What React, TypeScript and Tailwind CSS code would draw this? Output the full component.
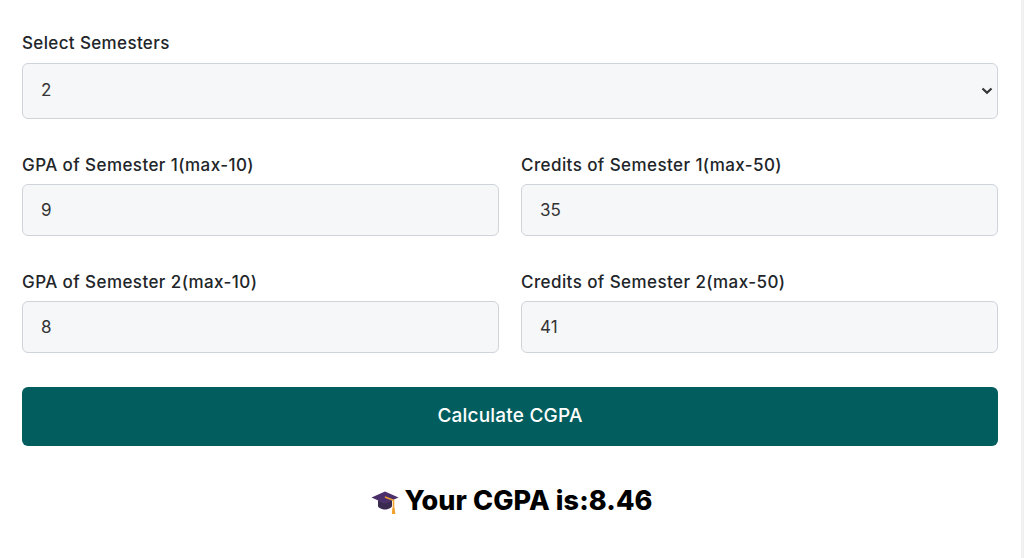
import React from "react";

const input = "block w-full h-[52px] rounded-[6px] border border-[#ced4da] bg-[#f6f7f9] px-[18px] text-[17px] text-[#333333] font-['Inter','Liberation_Sans',sans-serif] outline-none";

function Field({ name, value }: { name: string; value: string }) {
  return (
    <div className="flex-1 min-w-0">
      <label className="block text-[17px] leading-[26px] tracking-[0.42px] font-[450] text-[#212529] font-['Inter','Liberation_Sans',sans-serif]">{name}</label>
      <input className={`${input} mt-[6px]`} value={value} readOnly />
    </div>
  );
}

function Cap() {
  return (
    <svg width="28" height="26" viewBox="0 0 28 26" className="shrink-0">
      <path d="M7 12v6c0 1.5 3.5 3.5 7 3.5s7-2 7-3.5v-6l-7 3z" fill="#3b2a4f" />
      <path d="M0.5 9.5 14 3.5l13.5 6L14 15.5z" fill="#4b2f6b" />
      <path d="M14 9l8.5 3.2V21" fill="none" stroke="#f0a22e" strokeWidth="1.6" />
      <path d="M21.3 20h2.4l.6 6h-3.4z" fill="#f0a22e" />
    </svg>
  );
}

export default function App() {
  return (
    <div className="flex h-[558px] w-[1024px] overflow-hidden bg-white">
      <main className="flex-1 pl-[22px] pr-[23px] pt-[31px]">
        <label className="block text-[17px] leading-[24px] tracking-[0.36px] font-[450] text-[#212529] font-['Inter','Liberation_Sans',sans-serif]">Select Semesters</label>
        <div className="relative mt-[8px]">
          <select
            className="block w-full h-[56px] appearance-none rounded-[6px] border border-[#ced4da] bg-[#f6f7f9] px-[18px] text-[17px] text-[#333333] font-['Inter','Liberation_Sans',sans-serif] outline-none"
            defaultValue="2"
          >
            <option>1</option>
            <option>2</option>
            <option>3</option>
          </select>
          <svg width="12" height="8" viewBox="0 0 12 8" className="absolute right-[5px] top-[24px] pointer-events-none">
            <path d="M1.5 1.5 6 5.8l4.5-4.3" fill="none" stroke="#333333" strokeWidth="2.2" />
          </svg>
        </div>

        <div className="mt-[33px] flex gap-[22px]">
          <Field name="GPA of Semester 1(max-10)" value="9" />
          <Field name="Credits of Semester 1(max-50)" value="35" />
        </div>
        <div className="mt-[33px] flex gap-[22px]">
          <Field name="GPA of Semester 2(max-10)" value="8" />
          <Field name="Credits of Semester 2(max-50)" value="41" />
        </div>

        <button className="mt-[34px] block w-full h-[59px] rounded-[6px] bg-[#025e5e] text-center text-[19px] tracking-[0.2px] font-medium text-white font-['Inter','Liberation_Sans',sans-serif]">
          Calculate CGPA
        </button>

        <div className="mt-[37px] flex items-center justify-center gap-[5px] pl-[4px] text-[27px] leading-[36px] tracking-[0.1px] font-extrabold text-black font-['Inter','Liberation_Sans',sans-serif]">
          <Cap />
          <span>Your CGPA is:8.46</span>
        </div>
      </main>
      <div className="w-[3px] bg-[#f1f1f1]" />
    </div>
  );
}
